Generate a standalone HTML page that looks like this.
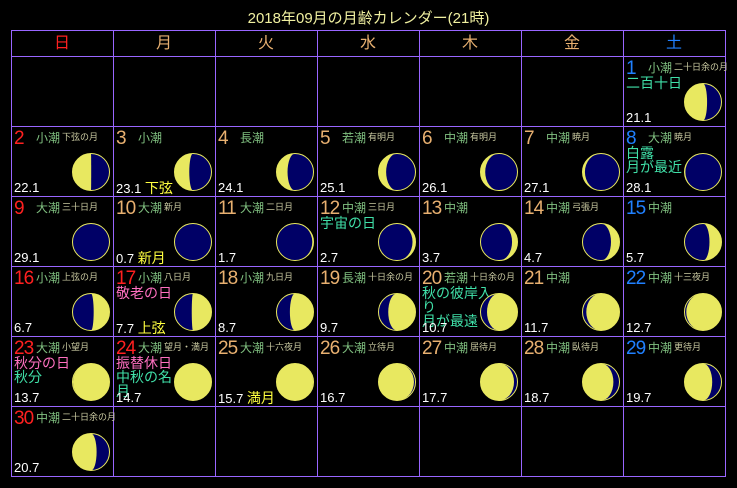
<!DOCTYPE html>
<html><head><meta charset="utf-8">
<style>
html,body{margin:0;padding:0;background:#000;width:737px;height:488px;overflow:hidden}
body{position:relative;font-family:"Liberation Sans","Noto Sans CJK JP",sans-serif}
.t{position:absolute;white-space:nowrap;line-height:1}
#title{position:absolute;left:0;width:737px;top:7px;text-align:center;color:#f0f0a0;font-size:15px;font-family:"Liberation Sans","WenQuanYi Zen Hei",sans-serif}
.hl{position:absolute;background:#9966ff}
</style></head><body>
<div id="title">2018年09月の月齢カレンダー(21時)</div>
<div id="c"></div>
<script>
var c=document.getElementById('c'),h='';
var X0=11,Y0=30,CW=102,HY=56,RH=70;
h+='<div class="hl" style="left:11px;top:30px;width:715px;height:1px"></div>';
h+='<div class="hl" style="left:11px;top:56px;width:715px;height:1px"></div>';
for(var r=1;r<=6;r++)h+='<div class="hl" style="left:11px;top:'+(HY+r*RH)+'px;width:715px;height:1px"></div>';
for(var i=0;i<=7;i++)h+='<div class="hl" style="left:'+(X0+i*CW)+'px;top:30px;width:1px;height:447px"></div>';
var heads=['日','月','火','水','木','金','土'];
for(var i=0;i<7;i++){var col=i==0?'#ff2020':(i==6?'#2080ff':'#e8b070');
h+='<div class="t" style="left:'+(X0+i*CW)+'px;width:'+CW+'px;text-align:center;top:36px;font-size:16px;color:'+col+'">'+heads[i]+'</div>';}
var D=[
[1,'小潮','二十日余の月',[['二百十日','c']],21.1,''],
[2,'小潮','下弦の月',[],22.1,''],[3,'小潮','',[],23.1,'下弦'],[4,'長潮','',[],24.1,''],[5,'若潮','有明月',[],25.1,''],[6,'中潮','有明月',[],26.1,''],[7,'中潮','暁月',[],27.1,''],[8,'大潮','暁月',[['白露','c'],['月が最近','c']],28.1,''],
[9,'大潮','三十日月',[],29.1,''],[10,'大潮','新月',[],0.7,'新月'],[11,'大潮','二日月',[],1.7,''],[12,'中潮','三日月',[['宇宙の日','c']],2.7,''],[13,'中潮','',[],3.7,''],[14,'中潮','弓張月',[],4.7,''],[15,'中潮','',[],5.7,''],
[16,'小潮','上弦の月',[],6.7,''],[17,'小潮','八日月',[['敬老の日','p']],7.7,'上弦',1],[18,'小潮','九日月',[],8.7,''],[19,'長潮','十日余の月',[],9.7,''],[20,'若潮','十日余の月',[['秋の彼岸入','c'],['り','c'],['月が最遠','c']],10.7,''],[21,'中潮','',[],11.7,''],[22,'中潮','十三夜月',[],12.7,''],
[23,'大潮','小望月',[['秋分の日','p'],['秋分','c']],13.7,'',1],[24,'大潮','望月・満月',[['振替休日','p'],['中秋の名','c'],['月','c']],14.7,'',1],[25,'大潮','十六夜月',[],15.7,'満月'],[26,'大潮','立待月',[],16.7,''],[27,'中潮','居待月',[],17.7,''],[28,'中潮','臥待月',[],18.7,''],[29,'中潮','更待月',[],19.7,''],
[30,'中潮','二十日余の月',[],20.7,'']];
function moon(cx,cy,a){var R=18.5,th=2*Math.PI*a/29.53,cs=Math.cos(th),rx=Math.max(0.01,Math.abs(R*cs));
var s='<svg style="position:absolute;left:'+(cx-20)+'px;top:'+(cy-20)+'px" width="40" height="40"><g transform="translate(20,20)"><circle r="'+R+'" fill="#000066" stroke="#e8e860" stroke-width="1"/>';
var wax=a<14.765,d;
if(wax){d='M0,'+(-R)+' A'+R+','+R+' 0 0 1 0,'+R+' A'+rx+','+R+' 0 0 '+(cs>0?0:1)+' 0,'+(-R)+'Z';}
else{d='M0,'+(-R)+' A'+R+','+R+' 0 0 0 0,'+R+' A'+rx+','+R+' 0 0 '+(cs>0?1:0)+' 0,'+(-R)+'Z';}
s+='<path d="'+d+'" fill="#e8e860"/></g></svg>';return s;}
for(var k=0;k<D.length;k++){var e=D[k],idx=e[0]+5,r=Math.floor(idx/7),col=idx%7;
var x=X0+col*CW,y=HY+r*RH;
var nc=(col==0||e[6])?'#ff2020':(col==6?'#2080ff':'#e8b070');
h+='<div class="t" style="left:'+(x+3)+'px;top:'+(y+3)+'px;font-size:19px;color:'+nc+';letter-spacing:-1px">'+e[0]+'</div>';
h+='<div class="t" style="left:'+(x+25)+'px;top:'+(y+6)+'px;font-size:12px;color:#80c080">'+e[1]+'</div>';
if(e[2])h+='<div class="t" style="left:'+(x+51)+'px;top:'+(y+7)+'px;font-size:9px;color:#c8c8a0">'+e[2]+'</div>';
for(var j=0;j<e[3].length;j++){var ev=e[3][j];h+='<div class="t" style="left:'+(x+3)+'px;top:'+(y+20+j*14)+'px;font-size:14px;color:'+(ev[1]=='p'?'#ff70c0':'#40e0a8')+'">'+ev[0]+'</div>';}
h+=moon(x+79.5,y+46,e[4]);
h+='<div class="t" style="left:'+(x+3)+'px;top:'+(y+55)+'px;font-size:13px;color:#fff">'+e[4].toFixed(1)+(e[5]?' <span style="color:#ffff40;font-size:14px">'+e[5]+'</span>':'')+'</div>';
}
c.innerHTML=h;
</script>
</body></html>
